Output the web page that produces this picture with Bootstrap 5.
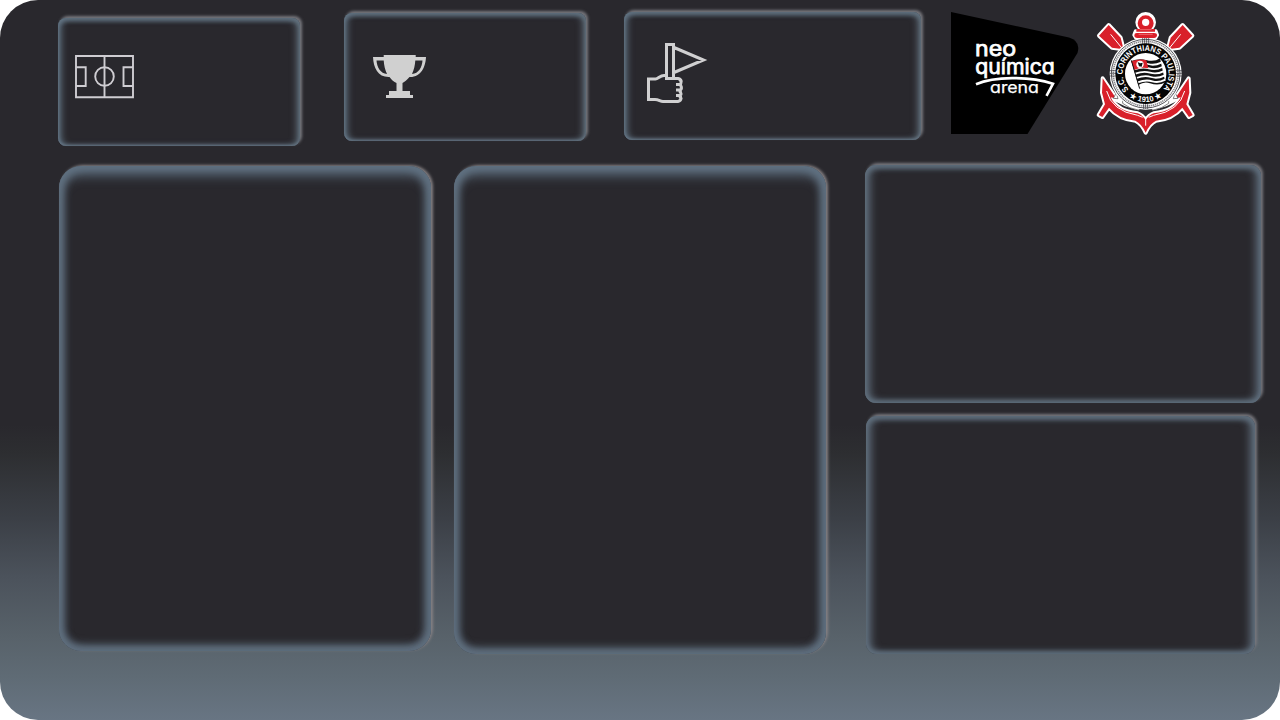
<!DOCTYPE html>
<html lang="pt-BR">
<head>
<meta charset="utf-8">
<meta name="viewport" content="width=device-width, initial-scale=1">
<title>Neo Química Arena</title>
<link href="https://cdn.jsdelivr.net/npm/bootstrap@5.3.0/dist/css/bootstrap.min.css" rel="stylesheet">
<style>
body{background:#fff;font-family:"Liberation Sans",sans-serif}
.board{width:1280px;height:720px;border-radius:38px;padding:10px 0 0 58px;
 background:linear-gradient(#29282d 0,#29282d 59%,#2d2e31 63%,#3b3f46 72%,#4b525b 80%,#58626a 88.5%,#5f6b75 94%,#687583 100%)}
.top-row{height:155px}
.panel{background:#29282d}
.stat{width:242px;height:128px;border-radius:8px;box-shadow:2px -2px 3px #77787e,inset 4px 0 7px -1px #637585,inset -4px 1px 7px -1px #63717d,inset 0 -2px 3px -1px #657482,inset 0 3px 4px #536371}
.stat-wide{width:297px}
.tall{width:372px;height:485px;border-radius:22px;box-shadow:2px -1px 3px #858184,inset 0 10px 12px -1px #5f7080,inset 5px 0 9px #5f6e7d,inset -6px 0 9px #5f6e7d,inset 0 -6px 9px #5f6e7d}
.side{width:396px;height:238px;border-radius:11px;box-shadow:2px -2px 3px #77777d,inset 5px 0 8px #5f6d7b,inset -5px 0 8px #5f6d7b,inset 0 3px 5px #596a79,inset 0 -3px 4px -1px #5b6c79}
.side-low{width:389px}
svg{display:block;flex:none}
.brand-type{font-family:Inter,sans-serif;font-feature-settings:"cv11" 1,"ss03" 1;font-weight:400;fill:#fff;stroke:#fff;stroke-width:.75}
.brand-type .fine{stroke-width:.25}
.crest-type{font-family:"Liberation Sans",sans-serif;font-weight:700;fill:#fff}
</style>
</head>
<body>
<main class="board overflow-hidden">
 <header class="top-row d-flex align-items-start">
  <section class="panel stat mt-2">
   <svg width="242" height="128" viewBox="58 18 242 128" fill="none" stroke="#cfcdd2" stroke-width="1.9"><path d="M76 56H133V97.300H76ZM104.500 56V97.300M76 67.200H85.700V86H76M133 67.200H123.500V86H133"/><circle cx="104.500" cy="76.500" r="9.300"/></svg>
  </section>
  <section class="panel stat" style="margin:3px 0 0 44px">
   <svg width="242" height="128" viewBox="344 13 242 128"><path d="M383.700 55H415.700V57H426C425.500 67 421 77.500 409.500 77C407 80 404.500 82 402.500 83V91H410V95H413V98H386V95H389V91H396.500V83C394 82 391.500 80 389.500 77C378 77.500 373.500 68 373 57H383.700ZM383.700 60.500H376.500C377 67.500 380.500 73.500 387 74C385 70 384 65 383.700 60.500ZM415.300 60.500C415 65 414 70 412 74C418.500 73.500 422 67.500 422.500 60.500Z" fill="#d0d0d0" fill-rule="evenodd"/></svg>
  </section>
  <section class="panel stat stat-wide" style="margin:2px 0 0 38px">
   <svg width="297" height="128" viewBox="624 12 297 128" fill="none" stroke="#d0d0d1" stroke-width="3"><path d="M666.500 78V44.500H673.500V78M674 47.500L703.500 60L674 72.500M667 75.500H664C660 75.500 658 79 655.500 79H648.500V99.500H655C659 99.500 660 101.500 663 101.500H678Q681 101 681 97.500M665 78.500H678Q681 79 681 82M676 84.500H682M676 90H682M676 95.500H682M680.800 80C682.500 82 680 84 680.500 85S682.500 88 680.500 90S682.500 93 680.500 95S682 98 681 99"/></svg>
  </section>
  <svg width="128" height="122" viewBox="951 12 128 122" style="margin:2px 0 0 30px" role="img" aria-label="neo química arena">
   <path d="M951 12L1069 37.500Q1081 41 1077.500 53L1027.500 134H951Z"/>
   <g class="brand-type"><text x="975" y="55.500" font-size="20.500" textLength="41" lengthAdjust="spacingAndGlyphs">neo</text><text x="975.300" y="74" font-size="20.500" textLength="79.500" lengthAdjust="spacingAndGlyphs">química</text><text class="fine" x="990" y="93" font-size="16.500" textLength="49" lengthAdjust="spacingAndGlyphs">arena</text></g>
   <path d="M976 84.200C994 76.500 1029 75.800 1053 83.700L1046.500 95.800" fill="none" stroke="#fff" stroke-width="2.600"/>
  </svg>
  <svg width="110" height="135" viewBox="0 0 330 405" style="margin:-5px 0 0 11px" role="img" aria-label="S.C. Corinthians Paulista 1910">
   <defs>
    <path id="arc-name" d="M118 255A69 69 0 1 1 216 255"/>
    <path id="arc-year" d="M107 266A85 85 0 0 0 227 266"/>
    <path id="oar" d="M27 92L56 60L92 98L99 126L117 143L108 150L89 131L66 128Z"/>
    <path id="anchor-shape" d="M38 220L79 281L62 277Q80 318 143 325Q157 330 167 345Q177 330 191 325Q254 318 272 277L255 281L296 220L298 263L289 298L308 330L297 336L277 308Q247 343 198 347Q179 356 167 383Q155 356 136 347Q87 343 57 308L37 336L26 330L45 298L36 263Z"/>
   </defs>
   <g fill="#fff" stroke="#fff" stroke-width="12" stroke-linejoin="round"><use href="#oar"/><use href="#oar" transform="translate(334 0) scale(-1 1)"/><use href="#anchor-shape"/><circle cx="167" cy="52" r="25"/><path d="M137 79H197L201 90L196 98H138L133 90ZM158 95H176V108H158Z"/></g>
   <g fill="#d9202a"><use href="#oar"/><use href="#oar" transform="translate(334 0) scale(-1 1)"/></g>
   <path d="M62 88L98 132M272 88L236 132" stroke="#fff" stroke-width="3"/>
   <path d="M77 265L68 286L105 304L145 316V278ZM257 265L266 286L229 304L189 316V278Z" fill="#fff"/>
   <use href="#anchor-shape" fill="#d9202a"/>
   <path d="M50 258Q65 318 143 331L158 337M284 258Q269 318 191 331L176 337M167 335V362" fill="none" stroke="#fff" stroke-width="3"/>
   <path d="M98 286L148 300V316Q117 311 98 295ZM236 286L186 300V316Q217 311 236 295Z" fill="#fff" stroke="#444" stroke-width="2"/>
   <path d="M79 263L70 280L84 281ZM255 263L264 280L250 281Z" fill="#fff" stroke="#444" stroke-width="2"/>
   <circle cx="167" cy="206" r="108" fill="#fff"/>
   <circle cx="167" cy="206" r="103" fill="none" stroke="#34343a" stroke-width="2.500"/>
   <circle cx="167" cy="206" r="97" fill="none" stroke="#88888c" stroke-width="5" stroke-dasharray="4 2"/>
   <path d="M158 98V118M164 98V118M170 98V118M176 98V118M58 197H78M58 205H78M58 213H78M256 197H276M256 205H276M256 213H276M161 294V312M167 294V312M173 294V312" stroke="#34343a" stroke-width="2"/>
   <circle cx="167" cy="206" r="91" fill="#050505"/><circle cx="167" cy="206" r="62" fill="#fff"/>
   <g class="crest-type"><text font-size="25"><textPath href="#arc-name" startOffset="2" textLength="317" lengthAdjust="spacingAndGlyphs">S.C. CORINTHIANS PAULISTA</textPath></text><text font-size="23"><textPath href="#arc-year" startOffset="50%" text-anchor="middle">★ 1910 ★</textPath></text></g>
   <path d="M124 168Q147 159 168 165Q193 172 210 160L226 232Q206 244 180 235Q163 228 145 240Z" fill="#111"/>
   <g fill="none" stroke="#fff" stroke-width="5.500"><path d="M131 179Q156 171 174 177T214 173"/><path d="M132 193Q157 184 177 190T217 186"/><path d="M136 206Q160 197 180 203T220 199"/><path d="M139 219Q164 210 183 216T223 212"/><path d="M143 232Q168 223 187 229T226 224"/></g>
   <path d="M124 169Q148 160 169 166L175 190Q153 185 133 195Z" fill="#d9202a"/><circle cx="150" cy="178" r="11" fill="#fff"/><path d="M143 171L151 175L158 173L155 185L147 184Z" fill="#111"/><path d="M124 166L149 251" stroke="#111" stroke-width="3"/>
   <g fill="#d9202a"><path fill-rule="evenodd" d="M142 72H150A24 24 0 1 1 184 72H195V80H139V72ZM167 41A11 11 0 1 0 167 63A11 11 0 1 0 167 41Z"/><path d="M142 84H192Q201 84 201 91T192 99H142Q133 99 133 91T142 84Z"/></g>
   <path d="M149 74H185M146 88H188" stroke="#ff8b8b" stroke-width="2"/>
  </svg>
 </header>
 <div class="d-flex align-items-start">
  <section class="panel tall" style="margin:1px 0 0 1px"></section>
  <section class="panel tall" style="margin:1px 0 0 23px;height:488px"></section>
  <div class="d-flex flex-column" style="margin-left:39px;gap:13px">
   <section class="panel side"></section>
   <section class="panel side side-low" style="margin-left:1px"></section>
  </div>
 </div>
</main>
<script src="https://cdn.jsdelivr.net/npm/bootstrap@5.3.0/dist/js/bootstrap.bundle.min.js"></script>
</body>
</html>
